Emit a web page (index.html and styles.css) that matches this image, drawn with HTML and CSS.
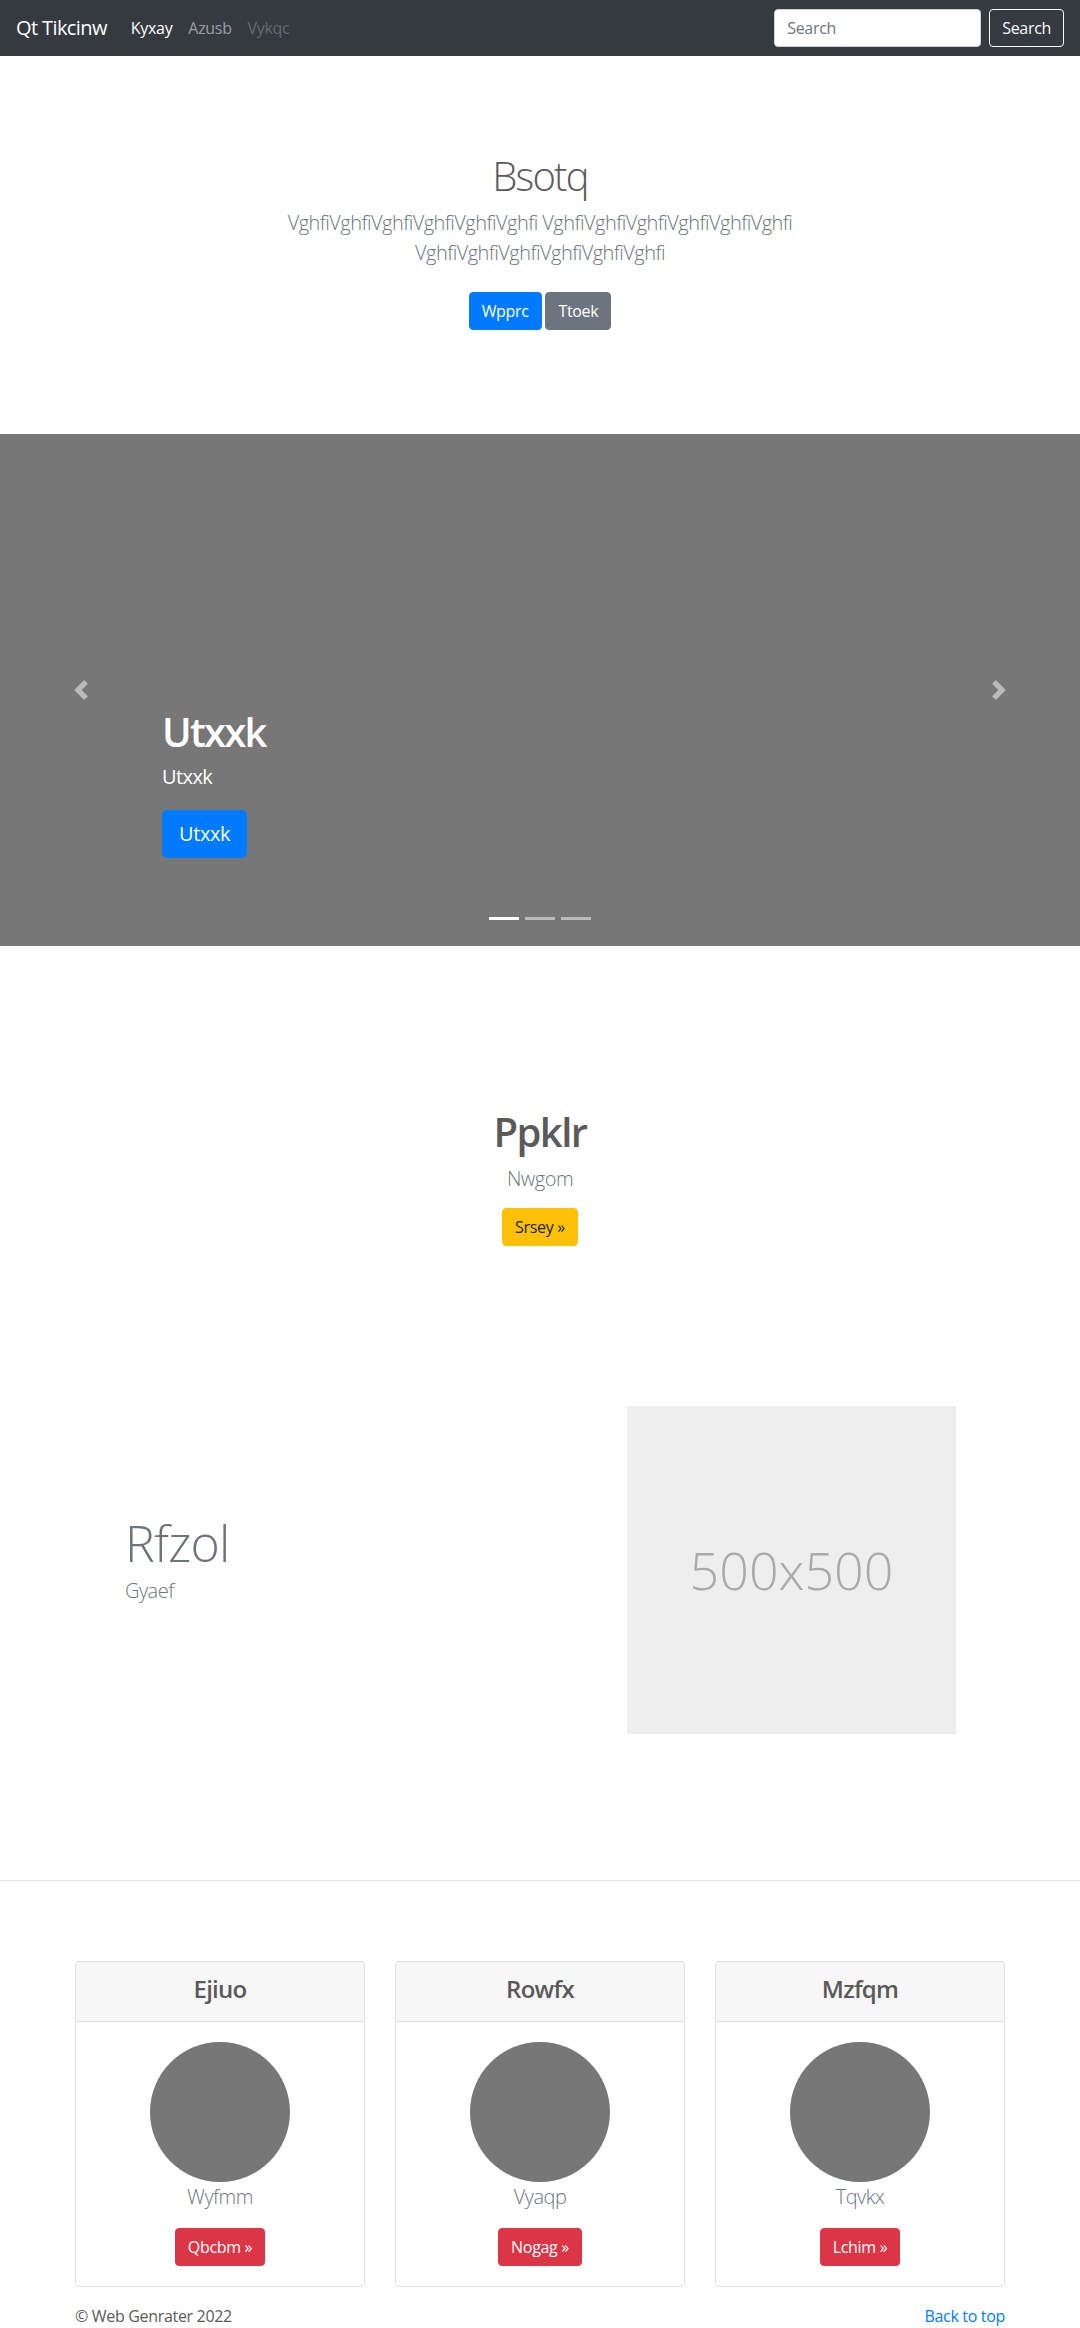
FILE: index.html
```html
<!DOCTYPE html>
<html lang="en">
<head>
<meta charset="utf-8">
<title>Qt Tikcinw</title>
<link rel="stylesheet" href="styles.css">
</head>
<body>
<nav class="navbar">
  <a class="brand" href="#">Qt Tikcinw</a>
  <ul class="nav">
    <li><a class="nav-link active" href="#">Kyxay</a></li>
    <li><a class="nav-link" href="#">Azusb</a></li>
    <li><a class="nav-link disabled" href="#">Vykqc</a></li>
  </ul>
  <form class="search">
    <input class="search-input" type="text" placeholder="Search">
    <button class="btn btn-outline-light" type="button">Search</button>
  </form>
</nav>

<section class="hero">
  <div class="hero-inner">
    <h1 class="hero-title">Bsotq</h1>
    <p class="lead muted hero-lead">VghfiVghfiVghfiVghfiVghfiVghfi VghfiVghfiVghfiVghfiVghfiVghfi VghfiVghfiVghfiVghfiVghfiVghfi</p>
    <p class="hero-actions">
      <a class="btn btn-primary" href="#">Wpprc</a>
      <a class="btn btn-secondary" href="#">Ttoek</a>
    </p>
  </div>
</section>

<div class="carousel">
  <ol class="indicators">
    <li class="active"></li>
    <li></li>
    <li></li>
  </ol>
  <div class="caption">
    <h1 class="caption-title">Utxxk</h1>
    <p class="caption-text">Utxxk</p>
    <p class="caption-actions"><a class="btn btn-lg btn-primary" href="#">Utxxk</a></p>
  </div>
  <a class="control prev" href="#">
    <svg viewBox="0 0 8 8" width="20" height="20"><path d="M5.25 0l-4 4 4 4 1.5-1.5-2.5-2.5 2.5-2.5-1.5-1.5z"/></svg>
  </a>
  <a class="control next" href="#">
    <svg viewBox="0 0 8 8" width="20" height="20"><path d="M2.75 0l-1.5 1.5 2.5 2.5-2.5 2.5 1.5 1.5 4-4-4-4z"/></svg>
  </a>
</div>

<section class="intro">
  <h1 class="intro-title">Ppklr</h1>
  <p class="lead muted intro-lead">Nwgom</p>
  <p><a class="btn btn-warning" href="#">Srsey »</a></p>
</section>

<section class="feature">
  <div class="feature-text">
    <h2 class="feature-title">Rfzol</h2>
    <p class="lead muted feature-lead">Gyaef</p>
  </div>
  <div class="feature-img">500x500</div>
</section>

<hr class="divider">

<section class="cards">
  <div class="card">
    <div class="card-header"><h4>Ejiuo</h4></div>
    <div class="card-body">
      <div class="avatar"></div>
      <p class="lead muted card-lead">Wyfmm</p>
      <a class="btn btn-danger" href="#">Qbcbm »</a>
    </div>
  </div>
  <div class="card">
    <div class="card-header"><h4>Rowfx</h4></div>
    <div class="card-body">
      <div class="avatar"></div>
      <p class="lead muted card-lead">Vyaqp</p>
      <a class="btn btn-danger" href="#">Nogag »</a>
    </div>
  </div>
  <div class="card">
    <div class="card-header"><h4>Mzfqm</h4></div>
    <div class="card-body">
      <div class="avatar"></div>
      <p class="lead muted card-lead">Tqvkx</p>
      <a class="btn btn-danger" href="#">Lchim »</a>
    </div>
  </div>
</section>

<footer class="footer">
  <p>© Web Genrater 2022</p>
  <a href="#">Back to top</a>
</footer>
</body>
</html>
```

FILE: styles.css
```css
* { box-sizing: border-box; }
body {
  margin: 0;
  font-family: "Open Sans", "Noto Sans", sans-serif;
  font-size: 16px;
  line-height: 1.5;
  letter-spacing: -0.02em;
  color: #5a5a5a;
  background: #fff;
}
a { text-decoration: none; }
h1, h2, h4, p { margin: 0; }

/* navbar */
.navbar {
  display: flex;
  align-items: center;
  height: 56px;
  padding: 0 16px;
  background: #343a40;
}
.brand { font-size: 20px; line-height: 30px; color: #fff; margin-right: 16px; letter-spacing: -0.03em; }
.nav { display: flex; list-style: none; margin: 0; padding: 0; }
.nav-link { display: block; padding: 8px; color: rgba(255,255,255,.5); }
.nav-link.active { color: #fff; }
.nav-link.disabled { color: rgba(255,255,255,.25); }
.search { margin-left: auto; display: flex; gap: 8px; margin-bottom: 0; }
.search-input {
  width: 207px; height: 38px; padding: 6px 12px;
  font-family: inherit; font-size: 16px; letter-spacing: -0.02em;
  border: 1px solid #ced4da; border-radius: 4px; color: #495057; background: #fff;
}
.search-input::placeholder { color: #6c757d; }

/* buttons */
.btn {
  display: inline-block;
  padding: 6px 12px;
  font-family: inherit;
  font-size: 16px;
  line-height: 24px;
  letter-spacing: -0.02em;
  border: 1px solid transparent;
  border-radius: 4px;
  text-align: center;
  vertical-align: middle;
}
.btn-lg { padding: 8px 16px; font-size: 20px; line-height: 30px; border-radius: 5px; }
.btn-outline-light { color: #f8f9fa; border-color: #f8f9fa; background: transparent; }
.btn-primary { color: #fff; background: #007bff; border-color: #007bff; }
.btn-secondary { color: #fff; background: #6c757d; border-color: #6c757d; }
.btn-warning { color: #212529; background: #ffc107; border-color: #ffc107; }
.btn-danger { color: #fff; background: #dc3545; border-color: #dc3545; }

.lead { font-size: 20px; font-weight: 300; line-height: 30px; letter-spacing: -0.026em; }
.muted { color: #6c757d; }

/* hero */
.hero { padding: 96px 0; text-align: center; }
.hero-inner { max-width: 640px; margin: 0 auto; padding: 0 15px; }
.hero-title { font-size: 40px; font-weight: 300; line-height: 48px; margin-bottom: 8px; letter-spacing: -0.045em; }
.hero-lead { margin-bottom: 16px; }
.hero-actions .btn { margin: 8px 0; }

/* carousel */
.carousel { position: relative; height: 512px; background: #777; }
.caption {
  position: absolute;
  left: 15%; right: 15%; bottom: 48px;
  padding: 20px 0;
  color: #fff;
}
.caption-title { font-size: 40px; font-weight: 600; line-height: 48px; margin-bottom: 6px; letter-spacing: -0.045em; }
.caption-text { font-size: 20px; line-height: 30px; margin-bottom: 18px; letter-spacing: -0.03em; }
.caption-actions { margin-bottom: 20px; }
.control {
  position: absolute; top: 0; bottom: 0; width: 15%;
  display: flex; align-items: center; justify-content: center;
  fill: rgba(255,255,255,.5);
}
.control.prev { left: 0; }
.control.next { right: 0; }
.indicators {
  position: absolute; left: 0; right: 0; bottom: 26px;
  display: flex; justify-content: center;
  list-style: none; margin: 0; padding: 0;
}
.indicators li { width: 30px; height: 3px; margin: 0 3px; background: rgba(255,255,255,.5); }
.indicators li.active { background: #fff; }

/* intro */
.intro { padding: 162px 0 160px; text-align: center; }
.intro-title { font-size: 40px; font-weight: 600; line-height: 48px; margin-bottom: 8px; letter-spacing: -0.04em; }
.intro-lead { margin-bottom: 14px; }

/* feature */
.feature {
  display: flex; align-items: center;
  padding: 0 124px 146px 125px;
}
.feature-text { flex: 1; }
.feature-title {
  font-size: 50px; font-weight: 300; line-height: 1;
  letter-spacing: -0.8px; color: #6c757d; margin-bottom: 8px;
}
.feature-lead { margin-bottom: 16px; }
.feature-img {
  width: 329px; height: 328px;
  background: #eee; color: #aaa;
  display: flex; align-items: center; justify-content: center;
  font-size: 52px; font-weight: 300; letter-spacing: 0;
}

.divider { margin: 0 0 80px; border: 0; border-top: 1px solid #e5e5e5; }

/* cards */
.cards { display: flex; gap: 30px; padding: 0 75px; }
.card {
  flex: 1;
  border: 1px solid #dfdfdf; border-radius: 4px;
  text-align: center;
  overflow: hidden;
}
.card-header { background: #f7f7f7; border-bottom: 1px solid #dfdfdf; padding: 12px 20px 18px; }
.card-header h4 { font-size: 24px; font-weight: 600; line-height: 29px; letter-spacing: -0.03em; }
.card-body { padding: 20px; }
.avatar { width: 140px; height: 140px; border-radius: 50%; background: #777; margin: 0 auto; }
.card-lead { margin-bottom: 16px; }

/* footer */
.footer {
  display: flex; justify-content: space-between; align-items: center;
  padding: 17px 75px 16px;
}
.footer a { color: #007bff; }
```
